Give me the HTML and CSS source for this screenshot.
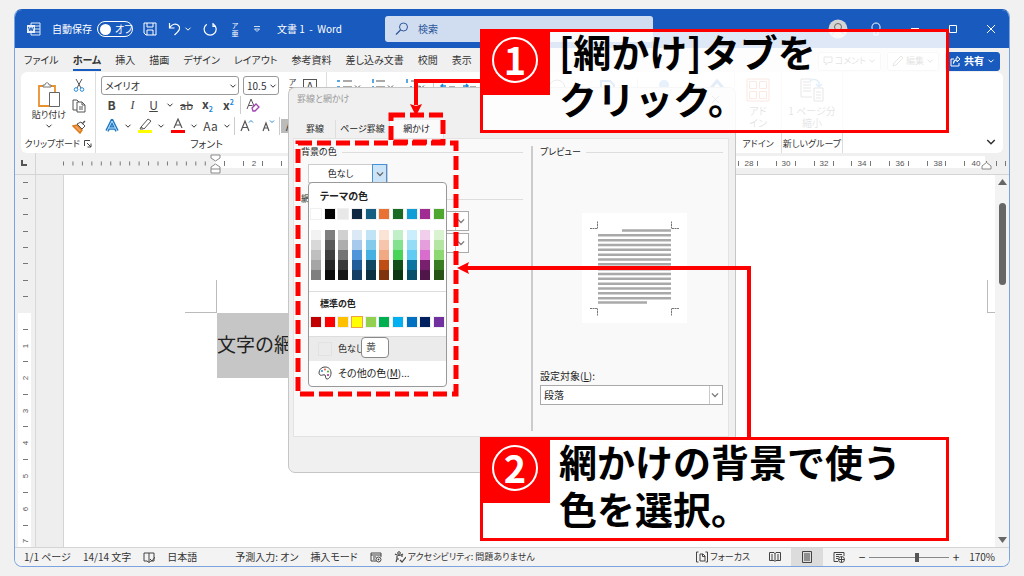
FILE: index.html
```html
<!DOCTYPE html>
<html lang="ja">
<head>
<meta charset="utf-8">
<title>文書 1 - Word</title>
<link rel="stylesheet" href="styles.css">
</head>
<body>
<svg class="defs" aria-hidden="true">
  <symbol id="chev" viewBox="0 0 8 8"><path d="M1.5 2.7 4 5.2 6.5 2.7" fill="none" stroke="currentColor"/></symbol>
</svg>
<main class="window">
  <header class="titlebar">
    <svg class="word-logo" width="14" height="14" viewBox="0 0 14 14"><path d="M4 1h9v12H4zM4 4h9M4 7h9M4 10h9" fill="none" stroke="#dfe9f8"/><rect y="3" width="8" height="8" fill="#e8effa"/><path d="M1.5 5 2.8 9 4 5.5 5.2 9 6.5 5" fill="none" stroke="#185abd"/></svg>
    <label class="autosave"><span>自動保存</span><input type="checkbox" class="toggle-input"><span class="toggle"><i></i>オフ</span></label>
    <div class="quick">
      <button aria-label="保存"><svg width="14" height="14" viewBox="0 0 14 14"><path d="M1 1h12v12H3L1 11zM4 1v4h6V1M4 13V8h6v5" fill="none" stroke="#fff"/></svg></button>
      <button class="undo" aria-label="元に戻す"><svg width="14" height="14" viewBox="0 0 14 14"><path d="M1.5 1v5h5M1.8 5.5C4 2 8 1 10.500 3.500c2.500 2.500 1 5-4 9.500" fill="none" stroke="#fff" stroke-width="1.200"/></svg><svg width="8" height="8"><use href="#chev"/></svg></button>
      <button aria-label="やり直し"><svg width="14" height="14" viewBox="0 0 14 14"><path d="M10 1v3.500h3M3.800 2.200A6 6 0 1 0 10.500 2.200" fill="none" stroke="#fff" stroke-width="1.200"/></svg></button>
      <button class="ruby-small" aria-label="ルビ"><span>ア</span><span>亜</span></button>
      <button aria-label="カスタマイズ"><svg width="8" height="8" viewBox="0 0 8 8"><path d="M1 1.500h6M1.500 4h5L4 6.500z" stroke="#fff" stroke-width=".8" fill="none"/></svg></button>
    </div>
    <h1>文書 1&nbsp; -&nbsp; Word</h1>
    <label class="search"><svg width="14" height="14" viewBox="0 0 14 14"><circle cx="8.500" cy="5" r="4" fill="none" stroke="#2b579a"/><path d="M5.500 8 1 12.500" stroke="#2b579a" stroke-width="1.200"/></svg><input type="text" placeholder="検索" aria-label="検索"></label>
    <div class="sys">
      <button aria-label="アカウント"><svg width="20" height="20" viewBox="0 0 20 20"><circle cx="10" cy="10" r="9.500" fill="#d5d5d5"/><circle cx="10" cy="8" r="3.500" fill="none" stroke="#666"/><path d="M4 16c1-5 11-5 12 0" fill="none" stroke="#666"/></svg></button>
      <button aria-label="ヒント"><svg width="12" height="14" viewBox="0 0 12 14"><path d="M4 9.500C1 8 1 1 6 1s5 7 2 8.500V13H4z" fill="none" stroke="#fff"/></svg></button>
      <button aria-label="最小化"><svg width="10" height="10"><path d="M1 4.500h8" stroke="#fff"/></svg></button>
      <button aria-label="最大化"><svg width="10" height="10"><path d="M1.500 1.500h7v7h-7z" fill="none" stroke="#fff"/></svg></button>
      <button aria-label="閉じる"><svg width="10" height="10"><path d="m1 1 8 8M9 1 1 9" stroke="#fff"/></svg></button>
    </div>
  </header>

  <nav class="tabs">
    <button>ファイル</button><button class="active">ホーム</button><button>挿入</button><button>描画</button><button>デザイン</button><button>レイアウト</button><button>参考資料</button><button>差し込み文書</button><button>校閲</button><button>表示</button>
    <div class="tab-actions">
      <button><svg width="10" height="10" viewBox="0 0 10 10"><path d="M1 1h8v5.500H5L3 9V6.500H1z" fill="none" stroke="#555"/></svg>コメント<svg width="8" height="8"><use href="#chev"/></svg></button>
      <button><svg width="12" height="12" viewBox="0 0 12 12"><path d="M1 11 2 8 9 1l2 2-7 7z" fill="none" stroke="#555"/></svg>編集<svg width="8" height="8"><use href="#chev"/></svg></button>
      <button class="share"><svg width="11" height="11" viewBox="0 0 11 11"><path d="M4 3H1v7h8V7M3.500 7.500C4 5 5.500 4 7 4V6l3-3-3-2.500V2.500C5 3 3.500 4.500 3.500 7.500z" fill="none" stroke="#fff"/></svg>共有<svg width="8" height="8"><use href="#chev"/></svg></button>
    </div>
  </nav>

  <section class="ribbon">
    <div class="group clipboard">
      <div class="clip-body">
        <button class="paste"><svg width="24" height="26" viewBox="0 0 24 26"><path d="M2 4h16v20H2z" fill="#fff" stroke="#e8912d" stroke-width="1.800"/><path d="M6 5V3h2c0-3 4-3 4 0h2v2z" fill="#fff" stroke="#777"/><path d="M12.500 10.500h10v14h-10z" fill="#fff" stroke="#666"/></svg><span>貼り付け</span><svg width="8" height="8"><use href="#chev"/></svg></button>
        <div class="clip-side">
          <button aria-label="切り取り"><svg width="12" height="14" viewBox="0 0 12 14"><path d="M3 1 8 10M9 1 4 10" stroke="#555" fill="none"/><circle cx="3" cy="11.500" r="1.800" fill="none" stroke="#2389d7"/><circle cx="9" cy="11.500" r="1.800" fill="none" stroke="#2389d7"/></svg></button>
          <button aria-label="コピー"><svg width="14" height="14" viewBox="0 0 14 14"><path d="M5 11H1V1h4l2 2M5 3h5l3 3v7H5zM10 3v3h3M7 8h4M7 10h4" fill="none" stroke="#555"/></svg></button>
          <button aria-label="書式のコピー"><svg width="14" height="14" viewBox="0 0 14 14"><path d="m1 6 4-1 5 5-2 3z" fill="#f4a460" stroke="#dd7b1b" stroke-width="1.500"/><path d="m5 4 5 5 3-3-4-4z" fill="#fff" stroke="#555"/><path d="m10 4 3-3" stroke="#555" stroke-width="1.500"/></svg></button>
        </div>
      </div>
      <div class="group-name">クリップボード<svg width="8" height="8" viewBox="0 0 8 8"><path d="M.5 6V.5H6M3 3l4 4M7 3.500V7H3.500" fill="none" stroke="#444"/></svg></div>
    </div>
    <div class="group font">
      <div class="row1">
        <span class="pick pick-font"><select aria-label="フォント"><option>メイリオ</option></select><svg width="8" height="8"><use href="#chev"/></svg></span>
        <span class="pick pick-size"><select aria-label="サイズ"><option>10.5</option></select><svg width="8" height="8"><use href="#chev"/></svg></span>
        <button class="tool ruby" aria-label="ルビ"><span>ア</span><span>亜</span></button>
        <button class="tool boxed">A</button>
      </div>
      <div class="row2">
        <button class="tool bold">B</button><button class="tool italic">I</button><button class="tool under">U</button><button class="drop" aria-label="下線の種類"><svg width="8" height="8"><use href="#chev"/></svg></button><button class="tool strike">ab</button><button class="tool bold"><span>x<sub>2</sub></span></button><button class="tool bold"><span>x<sup>2</sup></span></button><i class="bar"></i>
        <button class="tool" aria-label="書式のクリア"><svg width="14" height="14" viewBox="0 0 14 14"><path d="M1 11 5 1l3 7M2.500 7.500h4" fill="none" stroke="#555"/><path d="m6 10 4-4 3 3-4 4H7z" fill="#fff" stroke="#a23fb5" stroke-width="1.300"/></svg></button>
      </div>
      <div class="row3">
        <button class="tool" aria-label="文字の効果"><svg width="14" height="14" viewBox="0 0 14 14"><path d="M2 12 7 2l5 10M4 9h6" fill="none" stroke="#1976c5" stroke-width="3.600"/><path d="M2 12 7 2l5 10M4 9h6" fill="none" stroke="#cfe6f8"/></svg></button><button class="drop" aria-label="文字の効果の種類"><svg width="8" height="8"><use href="#chev"/></svg></button>
        <button class="tool" aria-label="蛍光ペン"><svg width="14" height="16" viewBox="0 0 14 16"><path d="m3 9 7-8 3 2-7 8zM3 9l-1 2h3" fill="none" stroke="#555"/><path d="M0 12h14v3H0z" fill="#ff0"/></svg></button><button class="drop" aria-label="蛍光ペンの色"><svg width="8" height="8"><use href="#chev"/></svg></button>
        <button class="tool" aria-label="フォントの色"><svg width="14" height="16" viewBox="0 0 14 16"><path d="M3 10 7 1l4 9M4.500 7h5" fill="none" stroke="#555" stroke-width="1.200"/><path d="M0 12h14v3H0z" fill="#f00"/></svg></button><button class="drop" aria-label="フォントの色の種類"><svg width="8" height="8"><use href="#chev"/></svg></button>
        <button class="tool">Aa</button><button class="drop" aria-label="文字種の変換"><svg width="8" height="8"><use href="#chev"/></svg></button><i class="bar"></i>
        <button class="tool" aria-label="拡大"><svg width="14" height="14" viewBox="0 0 14 14"><path d="m1 12 4-10 4 10M2.500 8.500h5" fill="none" stroke="#555" stroke-width="1.200"/><path d="m9 3.500 2-2 2 2" fill="none" stroke="#2389d7"/></svg></button>
        <button class="tool" aria-label="縮小"><svg width="14" height="14" viewBox="0 0 14 14"><path d="m2 12 3-8 3 8M3 9h4" fill="none" stroke="#555" stroke-width="1.200"/><path d="m9 1.500 2 2 2-2" fill="none" stroke="#2389d7"/></svg></button><i class="bar"></i><button class="tool shaded">A</button>
      </div>
      <div class="group-name">フォント</div>
    </div>
    <div class="group paragraph">
      <svg width="100%" height="14">
        <g fill="none" stroke="#555"><path d="M16 2h9M16 8h9M49 2h9M49 8h9M84 2h9M87 8h7M119 2h10M122 8h6M140 2h10M143 8h6"/><path d="M28 6.500l2.500 2.500L33 6.500M61 6.500l2.500 2.500L66 6.500M92 6.500l2.500 2.500 2.500-2.500"/></g>
        <g fill="none" stroke="#2389d7" stroke-width="1.500"><path d="M10 2h3M10 8h3M46 0v4M45 8h2M80 0v4M83 8h2M114 7h5M116 5l-2 2 2 2M136 7h5M139 5l2 2-2 2"/></g>
        <path d="M106.500 0v14M251.500 0v14M310.500 0v14M362.500 0v14" stroke="#ccc"/>
        <circle cx="230" cy="9" r="8" fill="none" stroke="#666"/><path d="M274 10V2h9l4 4v4" fill="none" stroke="#3577d4" stroke-width="2"/><rect x="332" y="1" width="10" height="12" rx="5" fill="#4b9be0"/><path d="m384 9 6-7 6 7" fill="none" stroke="#3577d4" stroke-width="3"/>
      </svg>
    </div>
    <div class="group addins">
      <button class="big"><svg width="24" height="24" viewBox="0 0 24 24"><path d="M1 1h22v22H1zM3.500 3.500h7v7h-7zM13.500 3.500h7v7h-7zM3.500 13.500h7v7h-7zM13.500 13.500h7v7h-7z" fill="none" stroke="#e0603e"/></svg><span>アド<br>イン</span></button>
      <div class="group-name">アドイン</div>
    </div>
    <div class="group custom">
      <button class="big"><svg width="24" height="24" viewBox="0 0 24 24"><path d="M12 19H1V1h11M3 4h8M3 7h8M3 10h8M3 13h8M14 10h9v13h-9zM16 14h5M16 17h5M16 20h5" fill="none" stroke="#555"/><path d="M10 3c5-4 10 0 9 5m-3-2 3 3 3-3" fill="none" stroke="#2389d7" stroke-width="1.300"/></svg><span>1 ページ分<br>縮小</span></button>
      <div class="group-name">新しいグループ</div>
    </div>
    <button class="collapse" aria-label="リボンを折りたたむ"><svg width="12" height="12"><use href="#chev"/></svg></button>
  </section>

  <div class="hruler">
    <svg width="100%" height="21" font-size="8">
      <rect x="200" y="3" width="770" height="12" fill="#fff"/>
      <path d="M7 7v5h5" fill="none" stroke="#555" stroke-width="2"/>
      <path d="M20.500 0v21" stroke="#d4d4d4"/>
      <path d="M48 10.500h150" stroke="#777" stroke-width="4" stroke-dasharray="1 8.450"/>
      <path d="M209.500 8v5M228.500 8v5M247.500 8v5M266.500 8v5M723.500 8v5M742.500 8v5M761.500 8v5M780.500 8v5M799.500 8v5M818.500 8v5M836.500 8v5M855.500 8v5M874.500 8v5M893.500 8v5M912.500 8v5M930.500 8v5M949.500 8v5M971.500 8v5M981.500 8v5M990.500 8v5" stroke="#777"/>
      <g fill="#555" text-anchor="middle"><text x="239" y="13">2</text><text x="734" y="13">28</text><text x="771" y="13">30</text><text x="809" y="13">32</text><text x="847" y="13">34</text><text x="885" y="13">36</text><text x="923" y="13">38</text><text x="961" y="13">40</text></g>
      <path d="M196 2h9v3l-4.500 3L196 5zM196 14l4.500-3 4.500 3v6h-9zM196 16h9M967 16v-3l4.500-3.500L976 13v3z" fill="#fff" stroke="#888"/>
    </svg>
  </div>

  <section class="workspace">
    <div class="vruler">
      <svg width="20" height="100%" font-size="8">
        <rect x="3" y="138" width="13" height="100%" fill="#fff"/>
        <path d="M8 7.500h5M8 23.500h5M8 39.500h5M8 56.500h5M8 72.500h5M8 88.500h5M8 105.500h5M8 121.500h5M8 154.500h5M8 186.500h5M8 219.500h5M8 251.500h5M8 284.500h5M8 317.500h5M8 350.500h5" stroke="#777"/>
        <g fill="#555" text-anchor="middle"><text transform="translate(13 171) rotate(-90)">1</text><text transform="translate(13 203) rotate(-90)">2</text><text transform="translate(13 236) rotate(-90)">3</text><text transform="translate(13 268) rotate(-90)">4</text><text transform="translate(13 301) rotate(-90)">5</text><text transform="translate(13 334) rotate(-90)">6</text><text transform="translate(13 366) rotate(-90)">7</text></g>
      </svg>
    </div>
    <article class="page">
      <div class="marks"><i class="mark-left"></i><i class="mark-right"></i></div>
      <p class="doc-text">文字の網かけ</p>
    </article>
    <div class="scroll">
      <svg width="9" height="6"><path d="M0 6 4.500 0 9 6z" fill="#666"/></svg>
      <i class="thumb"></i>
      <svg width="9" height="6"><path d="M0 0 4.500 6 9 0z" fill="#666"/></svg>
    </div>
  </section>

  <footer class="status">
    <span>1/1 ページ</span><span>14/14 文字</span>
    <svg width="12" height="12" viewBox="0 0 12 12"><path d="M6 2v9M6 2H1v8h3l2 1.500L8 10h3V2zM7 8l2 2 3-4" fill="none" stroke="#444"/></svg>
    <span class="lang">日本語</span><span>予測入力: オン</span><span>挿入モード</span>
    <svg width="12" height="12" viewBox="0 0 12 12"><path d="M6 10H1V2h10v4M1 4h10M3 6h3M3 8h2" fill="none" stroke="#444"/><circle cx="8.500" cy="8.500" r="2.500" fill="#fff" stroke="#444"/><circle cx="8.500" cy="8.500" r="1" fill="#444"/></svg>
    <span class="access"><svg width="12" height="12" viewBox="0 0 12 12"><circle cx="5" cy="2" r="1.300" fill="none" stroke="#444"/><path d="M1 3c3 2 5 2 8 0M3 5v3l-1 3M3 8h2M8 4v2M6 9l2 2 4-5" fill="none" stroke="#444" stroke-width="1.200"/></svg>アクセシビリティ: 問題ありません</span>
    <div class="status-right">
      <button class="focus"><svg width="12" height="12" viewBox="0 0 12 12"><path d="M2.500 1H.5v10h2M9.500 1h2v10h-2M4 3h3l2 2v5H4zM6.500 3v2.500H9" fill="none" stroke="#444"/></svg>フォーカス</button>
      <button class="view" aria-label="閲覧モード"><svg width="12" height="12" viewBox="0 0 12 12"><path d="M.5 1.500H5l1 1 1-1h4.500v8H7l-1 1-1-1H.5zM6 2v8M2 4h2M2 6h2M2 8h2M8 4h2M8 6h2M8 8h2" fill="none" stroke="#444"/></svg></button>
      <button class="view on" aria-label="印刷レイアウト"><svg width="12" height="12" viewBox="0 0 12 12"><path d="M1.500.5h9v11h-9zM3 3h6M3 5h6M3 7h6M3 9h6" fill="none" stroke="#444"/></svg></button>
      <button class="view" aria-label="Web レイアウト"><svg width="12" height="12" viewBox="0 0 12 12"><path d="M5 10.500H1v-9h10V5M3 3.500h6M3 5.500h3M3 7.500h2" fill="none" stroke="#444"/><circle cx="8.500" cy="8.500" r="3" fill="#fff" stroke="#444"/><path d="M5.500 8.500h6M8.500 5.500v6" stroke="#444"/></svg></button>
      <button class="zoom-btn">−</button><input type="range" min="0" max="100" value="60" aria-label="ズーム"><button class="zoom-btn">+</button><span>170%</span>
    </div>
  </footer>

  <section class="dialog" role="dialog" aria-label="罫線と網かけ">
    <div class="dialog-title">罫線と網かけ<button aria-label="閉じる"><svg width="9" height="9"><path d="m1 1 7 7M8 1 1 8" stroke="#777"/></svg></button></div>
    <div class="dialog-tabs"><button>罫線</button><button class="wide">ページ罫線</button><button class="wide current">網かけ</button></div>
    <div class="panel">
      <div class="left">
        <div class="legend">背景の色</div>
        <button class="fill"><span>色なし</span><i><svg width="10" height="10"><use href="#chev"/></svg></i></button>
        <div class="legend second">網かけ</div>
        <span class="box pattern"><select aria-label="種類"><option></option></select><i><svg width="10" height="10"><use href="#chev"/></svg></i></span>
        <span class="box pattern"><select aria-label="色"><option></option></select><i><svg width="10" height="10"><use href="#chev"/></svg></i></span>
      </div>
      <div class="right">
        <div class="legend">プレビュー</div>
        <svg class="preview" width="105" height="110" viewBox="0 0 105 110"><path fill="#fff" d="M0 0h105v110H0z"/><path d="M40 17.500h49" stroke="#a9a9a9" stroke-width="2.500"/><path d="M52.500 21.100v65.500" stroke="#a9a9a9" stroke-width="73" stroke-dasharray="2.500 2.330"/><path d="M16 89.500h49" stroke="#a9a9a9" stroke-width="2.500"/><path d="M8 15.500h7.500V8M97 15.500h-7.500V8M8 95.500h7.500V103M97 95.500h-7.500V103" fill="none" stroke="#777" stroke-dasharray="2 .5"/></svg>
        <label class="apply" for="target">設定対象(<u>L</u>):</label>
        <span class="box"><select id="target"><option>段落</option></select><i><svg width="10" height="10"><use href="#chev"/></svg></i></span>
      </div>
    </div>
    <div class="dialog-foot"><button>OK</button><button>キャンセル</button></div>

    <div class="popup">
      <h2>テーマの色</h2>
      <div class="swatches">
        <i style="background:#fff"></i><i style="background:#000"></i><i style="background:#e8e8e8"></i><i style="background:#0e2841"></i><i style="background:#156082"></i><i style="background:#e97132"></i><i style="background:#196b24"></i><i style="background:#0f9ed5"></i><i style="background:#a02b93"></i><i style="background:#4ea72e"></i>
      </div>
      <div class="swatches tints">
        <i style="background:#f2f2f2"></i><i style="background:#7f7f7f"></i><i style="background:#d0d0d0"></i><i style="background:#dbe9f7"></i><i style="background:#c0e4f5"></i><i style="background:#fbe3d6"></i><i style="background:#c1f0c8"></i><i style="background:#caeefb"></i><i style="background:#f2ceed"></i><i style="background:#d9f2d0"></i>
        <i style="background:#d8d8d8"></i><i style="background:#595959"></i><i style="background:#adadad"></i><i style="background:#a6c9ec"></i><i style="background:#83caeb"></i><i style="background:#f6c5ac"></i><i style="background:#83e28e"></i><i style="background:#95dcf7"></i><i style="background:#e59edc"></i><i style="background:#b4e5a2"></i>
        <i style="background:#bfbfbf"></i><i style="background:#3f3f3f"></i><i style="background:#747474"></i><i style="background:#4e95d9"></i><i style="background:#45b0e1"></i><i style="background:#f1a983"></i><i style="background:#47d459"></i><i style="background:#60cbf3"></i><i style="background:#d86dcd"></i><i style="background:#8ed873"></i>
        <i style="background:#a5a5a5"></i><i style="background:#262626"></i><i style="background:#3a3a3a"></i><i style="background:#215e99"></i><i style="background:#104862"></i><i style="background:#bf4e14"></i><i style="background:#12501a"></i><i style="background:#0b76a0"></i><i style="background:#78206e"></i><i style="background:#3a7c22"></i>
        <i style="background:#7f7f7f"></i><i style="background:#0c0c0c"></i><i style="background:#171717"></i><i style="background:#153e64"></i><i style="background:#0a3041"></i><i style="background:#80340d"></i><i style="background:#0c3512"></i><i style="background:#074f6a"></i><i style="background:#501549"></i><i style="background:#275317"></i>
      </div>
      <h2 class="standard">標準の色</h2>
      <div class="swatches">
        <i style="background:#c00000"></i><i style="background:#ff0000"></i><i style="background:#ffc000"></i><i class="picked" style="background:#ffff00"></i><i style="background:#92d050"></i><i style="background:#00b050"></i><i style="background:#00b0f0"></i><i style="background:#0070c0"></i><i style="background:#002060"></i><i style="background:#7030a0"></i>
      </div>
      <button class="item none"><i></i>色なし</button>
      <button class="item"><svg width="14" height="14" viewBox="0 0 14 14"><path d="M7 1c4 0 6 2.500 6 6s-2 6-4 6-1-3-2-4-3 1-5 0S1 1 7 1z" fill="none" stroke="#444"/><circle cx="4" cy="5" r="1" fill="#2389d7"/><circle cx="7" cy="3.500" r="1" fill="#e0603e"/><circle cx="10" cy="5.500" r="1" fill="#4ea72e"/><circle cx="10" cy="9" r="1" fill="#a02b93"/></svg><span>その他の色(<u>M</u>)...</span></button>
      <span class="tip">黄</span>
    </div>
  </section>
</main>

<svg class="lines" aria-hidden="true">
  <g fill="none" stroke="#f00">
    <path d="M480 81H416v24M749 437V268H466" stroke-width="4"/>
    <g stroke-width="5" stroke-dasharray="14 5"><rect x="391" y="115" width="52" height="27"/><rect x="298" y="143" width="158" height="251"/></g>
  </g>
  <path d="M410 104l6 2 6-2-6 12zM469 262l-2 6 2 6-12-6z" fill="#f00"/>
</svg>
<aside class="callout one"><b class="badge"><span>1</span></b><p>[網かけ]タブを<br>クリック。</p></aside>
<aside class="callout two"><b class="badge"><span>2</span></b><p>網かけの背景で使う<br>色を選択。</p></aside>
</body>
</html>
```
FILE: styles.css
```css
* { box-sizing: border-box; }
body {
  margin: 0;
  height: 100vh;
  padding: 9px 14px;
  background: #f1f1f1;
  color: #333;
  font: 10px/12px "Noto Sans CJK JP", sans-serif;
  overflow: hidden;
  position: relative;
}
svg { display: block; flex: none; }
.defs { position: absolute; width: 0; height: 0; }
button, select, input { font: inherit; color: inherit; margin: 0; font-feature-settings: inherit; }
button { border: 0; background: none; padding: 0; display: flex; align-items: center; justify-content: center; white-space: nowrap; }
h1, h2, p { margin: 0; font-weight: 400; }

.window {
  position: relative;
  height: 100%;
  display: flex;
  flex-direction: column;
  border: 1px solid #7aa3df;
  border-top-color: #185abd;
  border-radius: 8px;
  background: #f0f0f0;
  overflow: hidden;
  font-feature-settings: "palt";
}

/* title bar */
.titlebar { height: 38px; flex: none; display: flex; align-items: center; background: #185abd; color: #fff; padding: 0 13px 0 12px; }
.autosave { display: flex; align-items: center; gap: 5px; margin-left: 11px; white-space: nowrap; }
.toggle-input { position: absolute; opacity: 0; }
.toggle { display: flex; align-items: center; gap: 4px; width: 36px; height: 16px; border: 1px solid #fff; border-radius: 8px; padding-left: 2px; }
.toggle i { flex: none; width: 11px; height: 11px; border-radius: 50%; background: #fff; }
.quick { display: flex; align-items: center; gap: 11px; margin-left: 10px; }
.undo { gap: 2px; }
.ruby-small { flex-direction: column; font-size: 7px; line-height: 8px; width: 14px; }
.titlebar h1 { font-size: 10px; width: 92px; margin-left: 16px; white-space: nowrap; }
.search { flex: 0 1 268px; height: 26px; border-radius: 3px; background: #d0dcef; display: flex; align-items: center; gap: 9px; padding: 0 10px; margin-left: 16px; }
.search input { border: 0; background: none; padding: 0; min-width: 0; flex: 1; }
.search input::placeholder { color: #2b579a; opacity: 1; }
.sys { margin-left: auto; display: flex; align-items: center; gap: 28px; }
.sys button:first-child { margin-right: -6px; }

/* ribbon tabs */
.tabs { height: 24px; flex: none; display: flex; align-items: center; gap: 14px; padding: 2px 9px 0; }
.tabs > button { height: 20px; border-bottom: 2px solid transparent; }
.tabs > .active { font-weight: 700; border-color: #185abd; }
.tab-actions { margin-left: auto; display: flex; gap: 6px; }
.tab-actions button { height: 19px; padding: 0 4px; gap: 2px; border: 1px solid #ccc; border-radius: 3px; background: #fafafa; font-size: 9px; }
.tab-actions .share { background: #185abd; border-color: #185abd; color: #fff; font-weight: 700; font-size: 10px; gap: 3px; }

/* ribbon */
.ribbon { flex: none; height: 81px; margin: 0 6px; display: flex; background: #fff; border-radius: 6px; }
.group { flex: none; display: flex; flex-direction: column; border-right: 1px solid #ddd; padding-top: 4px; }
.group-name { margin-top: auto; height: 18px; display: flex; align-items: center; justify-content: center; gap: 4px; white-space: nowrap; font-size: 9px; }
.clipboard { width: 75px; }
.clipboard .group-name { justify-content: flex-end; padding-right: 3px; }
.clip-body { display: flex; padding: 2px 0 0 11px; gap: 6px; }
.paste { flex-direction: column; width: 34px; gap: 1px; font-size: 9px; }
.clip-side { display: flex; flex-direction: column; gap: 7px; }
.font { width: 231px; padding-left: 5px; }
.font .group-name { margin-right: 14px; font-size: 10px; }
.row1, .row2, .row3 { display: flex; align-items: center; height: 20px; }
.row2, .row3 { height: 21px; }
.pick, .box { position: relative; display: flex; }
.pick { height: 19px; margin-right: 4px; }
.pick select, .box select { appearance: none; width: 100%; border: 1px solid #999; border-radius: 3px; background: #fff; padding: 0 3px; }
.pick svg { position: absolute; right: 2px; top: 6px; }
.pick-font { width: 138px; }
.pick-size { width: 36px; margin-right: 3px; }
.tool { width: 21px; height: 19px; font-size: 12px; color: #444; }
.drop { width: 12px; height: 19px; }
.bar { width: 1px; height: 18px; margin: 0 1px; background: #ccc; }
.bold { font-weight: 700; }
.bold sub, .bold sup { font-size: 7px; line-height: 7px; color: #2389d7; }
.italic { font-family: "Liberation Serif", serif; font-style: italic; }
.under { text-decoration: underline; }
.strike { text-decoration: line-through; font-size: 11px; }
.ruby { flex-direction: column; font-size: 8px; line-height: 9px; }
.boxed { width: 14px; height: 14px; border: 1px solid #555; }
.shaded { width: 17px; height: 14px; background: #bbb; }
.paragraph { flex: 1; min-width: 0; padding: 7px 0 0; }
.addins { width: 47px; }
.custom { width: 61px; }
.big { flex-direction: column; gap: 3px; padding-top: 2px; line-height: 12px; }
.collapse { width: 160px; align-self: flex-end; justify-content: flex-end; padding: 0 6px 5px 0; }

/* rulers and document */
.hruler { flex: none; height: 22px; border-bottom: 1px solid #d4d4d4; font-family: "Liberation Sans", sans-serif; }
.workspace { flex: 1; min-height: 0; display: flex; }
.vruler { width: 49px; border-right: 1px solid #d4d4d4; font-family: "Liberation Sans", sans-serif; overflow: hidden; background: linear-gradient(90deg, #f0f0f0 20px, #d8d8d8 20px, #d8d8d8 21px, #eee 21px); }
.page { flex: 1; background: #fff; padding-top: 105px; }
.marks { display: flex; justify-content: space-between; height: 33px; padding-left: 121px; }
.mark-left { width: 32px; border: solid #bbb; border-width: 0 1px 1px 0; }
.mark-right { width: 8px; border: solid #bbb; border-width: 0 0 1px 1px; }
.doc-text { display: inline-block; margin-left: 153px; padding: 0 150px 0 0; font-size: 19px; line-height: 62px; padding-bottom: 3px; background: #c6c6c6; font-feature-settings: normal; color: #222; }
.scroll { width: 14px; background: #f3f3f3; display: flex; flex-direction: column; align-items: center; padding: 4px 0; }
.thumb { width: 7px; height: 82px; margin: 18px 0 auto; border-radius: 4px; background: #666; }

/* status bar */
.status { flex: none; height: 19px; display: flex; align-items: center; gap: 12px; padding: 0 14px 0 9px; border-top: 1px solid #d4d4d4; background: #f3f3f3; white-space: nowrap; }
.lang { margin-right: 26px; }
.access { display: flex; align-items: center; gap: 2px; font-size: 9px; }
.status-right { margin-left: auto; display: flex; align-items: center; align-self: stretch; }
.focus { gap: 2px; margin-right: 9px; font-size: 9px; }
.view { width: 32px; height: 100%; }
.on { background: #dcdcdc; }
.zoom-btn { width: 14px; font-size: 12px; }
.status-right span { margin-left: 6px; }
.status-right input { appearance: none; width: 80px; height: 12px; background: linear-gradient(#888, #888) center / 100% 1px no-repeat; }
.status-right input::-webkit-slider-thumb { appearance: none; width: 4px; height: 9px; background: #555; }

/* borders and shading dialog */
.dialog { position: absolute; left: 273px; top: 77px; width: 448px; height: 386px; display: flex; flex-direction: column; padding: 0 6px 0 4px; border: 1px solid #c6c6c6; border-radius: 7px; background: #f0f0f0; }
.dialog-title { flex: none; height: 32px; display: flex; justify-content: space-between; padding: 5px 9px 0 4px; color: #999; font-size: 9px; }
.dialog-title button { height: 12px; }
.dialog-tabs { flex: none; display: flex; height: 18px; padding-left: 2px; color: #222; font-size: 9px; }
.dialog-tabs button { width: 41px; border-right: 1px solid #ddd; }
.dialog-tabs .wide { width: 54px; }
.dialog-tabs .current { background: #fafafa; }
.panel { flex: 1; display: flex; border: 1px solid #e3e3e3; background: #f9f9f9; color: #222; }
.left { width: 239px; margin: 7px 0 5px; padding: 0 8px 0 7px; border-right: 2px solid #ccc; }
.right { flex: 1; margin-top: 7px; padding: 0 5px 0 7px; }
.legend { display: flex; align-items: center; gap: 5px; height: 12px; white-space: nowrap; font-size: 9px; }
.legend::after { content: ""; flex: 1; height: 1px; background: #ddd; }
.fill { width: 80px; height: 19px; margin: 6px 0 0 7px; border: 1px solid #ccc; background: #fff; font-size: 9px; }
.fill span { flex: 1; }
.fill i { width: 15px; height: 19px; border: 1px solid #4a90d9; background: #cce4f7; display: flex; align-items: center; justify-content: center; color: #666; }
.second { margin: 10px 0 6px; }
.box { height: 20px; }
.box select { border: 1px solid #aaa; border-radius: 0; }
.box i { position: absolute; right: 1px; top: 1px; width: 13px; height: 18px; border-left: 1px solid #ccc; display: flex; align-items: center; color: #777; }
.pattern { width: 161px; margin: 0 0 2px 7px; }
.preview { margin: 55px 0 47px 42px; }
.apply { display: block; margin-bottom: 3px; }
.dialog-foot { flex: none; height: 35px; display: flex; justify-content: flex-end; align-items: center; gap: 5px; }
.dialog-foot button { width: 62px; height: 18px; border: 1px solid #ccc; border-radius: 3px; background: #fdfdfd; }

/* colour menu */
.popup { position: absolute; left: 19px; top: 94px; width: 139px; padding: 7px 0 1px; border: 1px solid #999; border-radius: 4px; background: #fff; color: #222; }
.popup h2 { font-size: 10px; font-weight: 700; line-height: 12px; padding-left: 11px; }
.popup .standard { font-size: 9px; }
.swatches { display: grid; grid-template-columns: repeat(10, 1fr); justify-items: center; margin-top: 7px; }
.swatches i { width: 10px; height: 10px; box-shadow: 0 0 0 1px #0000000f; }
.tints { margin-top: 11px; }
.tints i { box-shadow: none; }
.swatches .picked { box-shadow: 0 0 0 1px #f0a040; }
.popup .standard { margin-top: 11px; padding-top: 6px; border-top: 1px solid #ddd; }
.popup .standard + .swatches { margin-bottom: 9px; }
.item { width: 100%; height: 24px; justify-content: flex-start; padding-left: 9px; gap: 6px; }
.none { background: #ebebeb; border-top: 1px solid #ddd; height: 25px; font-size: 9px; }
.none i { width: 14px; height: 14px; border: 1px solid #e2e2e2; }
.tip { position: absolute; left: 52px; top: 154px; width: 28px; height: 21px; border: 1px solid #888; border-radius: 4px; background: #fff; padding: 3px 4px; color: #555; }

/* annotations */
.lines { position: absolute; inset: 0; width: 100%; height: 100%; }
.callout { position: absolute; left: 480px; width: 469px; height: 104px; border: 3px solid #f00; background: #ffffffdc; display: flex; gap: 9px; color: #000; }
.callout p { font-size: 38px; line-height: 47px; font-weight: 700; margin-top: -3px; white-space: nowrap; }
.one { top: 29px; }
.one p { margin-top: -5px; }
.two { top: 437px; background: #fffffff5; }
.badge { flex: none; width: 70px; height: 66px; margin: -3px 0 0 -3px; padding-bottom: 4px; background: #f00; color: #fff; display: flex; align-items: center; justify-content: center; }
.badge span { width: 46px; height: 46px; border: 2px solid #fff; border-radius: 50%; font-size: 38px; line-height: 40px; text-align: center; }
```
